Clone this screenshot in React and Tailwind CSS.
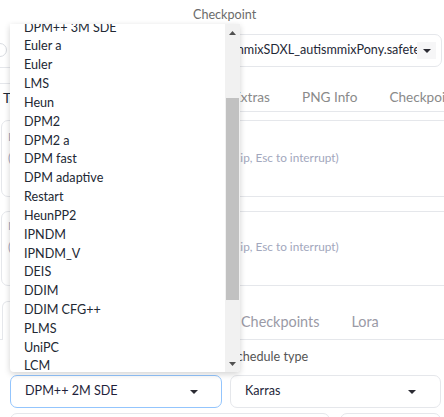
import React from "react";

const Caret = ({ w = 8, h = 4, c = "#2b2b33" }) => (
  <svg width={w} height={h} viewBox="0 0 8 4" className="block">
    <path d="M0 0H8L4 4Z" fill={c} />
  </svg>
);

const ScrollArrow = ({ up }) => (
  <svg width="7" height="4" viewBox="0 0 7 4" className="block">
    <path d={up ? "M0 4H7L3.5 0Z" : "M0 0H7L3.5 4Z"} fill="#505050" />
  </svg>
);

const items = [
  "DPM++ 3M SDE",
  "Euler a",
  "Euler",
  "LMS",
  "Heun",
  "DPM2",
  "DPM2 a",
  "DPM fast",
  "DPM adaptive",
  "Restart",
  "HeunPP2",
  "IPNDM",
  "IPNDM_V",
  "DEIS",
  "DDIM",
  "DDIM CFG++",
  "PLMS",
  "UniPC",
  "LCM",
  "DDPM",
];

function PromptCard({ h, mt, pt, first }) {
  return (
    <div
      className={`${mt} ${h} ${pt} ml-[1px] mr-[-30px] rounded-[7px] border border-[#e5e7eb] bg-white pl-[6px] text-[11.8px] leading-[21px] text-[#a2a7bd] whitespace-nowrap`}
    >
      <div>{first}</div>
      <div>(Press Ctrl+Enter to generate, Alt+Enter to skip, Esc to interrupt)</div>
    </div>
  );
}

export default function App() {
  return (
    <div className="relative w-[444px] h-[417px] overflow-hidden bg-white font-['Lato',sans-serif] text-[12.6px] text-[#1f2937]">
      {/* top row: quicksettings */}
      <div className="flex h-[68px]">
        <div className="w-[193px] shrink-0 border-b border-[#e5e7eb]">
          <div className="mt-[43px] ml-[-7px] w-[14px] h-[14px] rounded-full border border-[#d8dbe0]" />
        </div>
        <div className="flex-1 min-w-0 flex flex-col pr-[2px]">
          <div className="h-[34px] pb-[3px] flex items-center text-[#6b6b6b]">Checkpoint</div>
          <div className="h-[33px] rounded-[7px] border border-[#e5e7eb] flex items-center pl-[13px] pr-[5px]">
            <div className="flex-1 min-w-0 overflow-hidden whitespace-nowrap text-[#1f2937]">
              autismmixSDXL_autismmixPony.safetensors
            </div>
            <div className="w-[19px] h-[17px] shrink-0 bg-[#f6f6f7] flex items-center justify-center">
              <Caret />
            </div>
          </div>
        </div>
      </div>

      {/* main tabs */}
      <div className="mt-[15px] h-[29px] flex border-b border-[#e5e7eb] text-[13.6px] whitespace-nowrap">
        <div className="ml-[-12px] w-[111px] shrink-0 mb-[-1px] h-[29px] pl-[14px] flex items-center rounded-t-[6px] border border-b-0 border-[#e5e7eb] bg-white text-[#1f2937]">
          Txt2img
        </div>
        <div className="w-[118px] shrink-0 pl-[16px] flex items-center text-[#888]">Img2img</div>
        <div className="shrink-0 px-[16px] flex items-center text-[#8a8a8a]">Extras</div>
        <div className="shrink-0 px-[16px] flex items-center text-[#8a8a8a]">PNG Info</div>
        <div className="shrink-0 px-[16px] flex items-center text-[#8a8a8a]">Checkpoint Merger</div>
      </div>

      <PromptCard mt="mt-[8px]" h="h-[77px]" pt="pt-[5px]" first="Prompt" />
      <PromptCard mt="mt-[14px]" h="h-[75px]" pt="pt-[3px]" first="Negative prompt" />

      {/* sub tabs */}
      <div className="mt-[15px] h-[39px] flex border-b border-[#e5e7eb] text-[14.4px] whitespace-nowrap">
        <div className="ml-[2px] w-[110px] shrink-0 mb-[-1px] h-[39px] pl-[12px] pt-[4px] flex items-center rounded-t-[6px] border border-b-0 border-[#e5e7eb] bg-white text-[#1f2937]">
          Generation
        </div>
        <div className="w-[113px] shrink-0 pl-[16px] pt-[4px] flex items-center text-[#999]">Textual Inversion</div>
        <div className="shrink-0 px-[16px] pt-[4px] flex items-center text-[#9a9aa6]">Checkpoints</div>
        <div className="shrink-0 px-[16px] pt-[4px] flex items-center text-[#9a9aa6]">Lora</div>
      </div>

      {/* sampler / schedule */}
      <div className="flex gap-[8px] pl-[10px] pr-[3px]">
        <div className="w-[212px] shrink-0 flex flex-col">
          <div className="h-[35px] flex items-center text-[#555]">Sampling method</div>
          <div className="h-[33px] rounded-[7px] border border-[#93c5fd] flex items-center pl-[14px] pr-[23px]">
            <div className="flex-1 text-[#1f1f3a]">DPM++ 2M SDE</div>
            <Caret />
          </div>
        </div>
        <div className="flex-1 flex flex-col">
          <div className="h-[35px] flex items-center text-[#555]">Schedule type</div>
          <div className="h-[33px] rounded-[7px] border border-[#e5e7eb] flex items-center pl-[14px] pr-[24px]">
            <div className="flex-1 text-[#1f1f3a]">Karras</div>
            <Caret />
          </div>
        </div>
      </div>

      <div className="mt-[5px] flex gap-[10px] pl-[10px] pr-[3px]">
        <div className="w-[320px] h-[30px] rounded-[7px] border border-[#e5e7eb]" />
        <div className="flex-1 h-[30px] rounded-[7px] border border-[#e5e7eb]" />
      </div>

      {/* open dropdown list */}
      <div className="absolute left-[10px] top-[24px] w-[230px] h-[348px] bg-white flex overflow-hidden rounded-b-[4px] shadow-[0_2px_6px_rgba(0,0,0,0.18)]">
        <div className="flex-1 overflow-hidden">
          <div className="mt-[-5.4px]">
            {items.map((t, i) => (
              <div
                key={i}
                className="h-[18.83px] flex items-center pl-[14px] whitespace-nowrap text-[12.6px] text-[#222833]"
              >
                {t}
              </div>
            ))}
          </div>
        </div>
        <div className="w-[15px] shrink-0 bg-[#f1f1f1] flex flex-col">
          <div className="h-[17px] flex items-center justify-center">
            <ScrollArrow up />
          </div>
          <div className="h-[57px]" />
          <div className="h-[202px] mx-[1px] bg-[#c1c1c1]" />
          <div className="flex-1" />
          <div className="h-[17px] flex items-center justify-center">
            <ScrollArrow />
          </div>
        </div>
      </div>
    </div>
  );
}
